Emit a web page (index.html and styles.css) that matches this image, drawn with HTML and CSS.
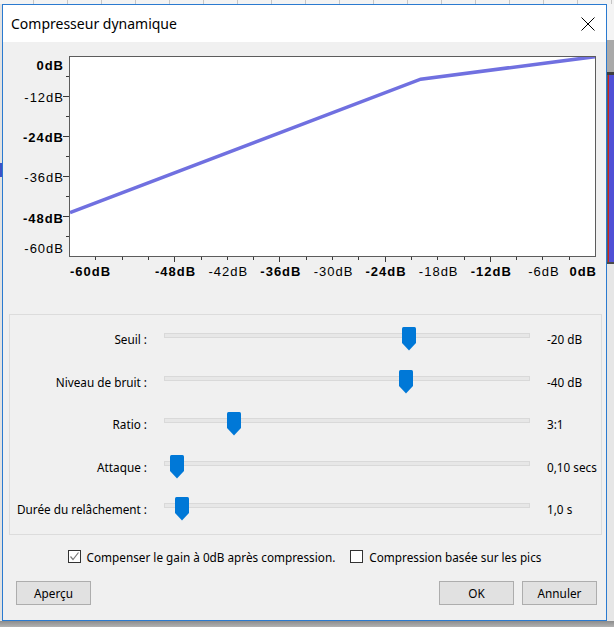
FILE: index.html
```html
<!DOCTYPE html>
<html lang="fr">
<head>
<meta charset="utf-8">
<title>Compresseur dynamique</title>
<link rel="stylesheet" href="styles.css">
</head>
<body>
<div class="screen">
  <div class="bg-top"></div>
  <div class="mid">
    <div class="bg-left"></div>
    <div class="dialog">
      <div class="titlebar">
        <span class="title">Compresseur dynamique</span>
        <svg class="close" width="14" height="14" viewBox="0 0 14 14"><path d="M0.5 0.5 L13.5 13.5 M13.5 0.5 L0.5 13.5"/></svg>
      </div>
      <div class="content">
        <svg class="graph" width="603" height="272" viewBox="0 0 603 272">
          <defs><clipPath id="plotclip"><rect x="67" y="15" width="525" height="199"/></clipPath></defs>
          <rect class="plot-bg" x="67" y="15" width="525" height="199"/>
          <polyline class="curve" clip-path="url(#plotclip)" points="67,170.5 417.7,37.2 593,14.5"/>
          <rect class="plot-frame" x="66.5" y="14.5" width="526" height="200"/>
          <g class="ticks">
            <line x1="63" y1="34.5" x2="66" y2="34.5"/>
            <line x1="60" y1="54.5" x2="66" y2="54.5"/>
            <line x1="63" y1="74.5" x2="66" y2="74.5"/>
            <line x1="60" y1="94.5" x2="66" y2="94.5"/>
            <line x1="63" y1="114.5" x2="66" y2="114.5"/>
            <line x1="60" y1="134.5" x2="66" y2="134.5"/>
            <line x1="63" y1="154.5" x2="66" y2="154.5"/>
            <line x1="60" y1="174.5" x2="66" y2="174.5"/>
            <line x1="63" y1="194.5" x2="66" y2="194.5"/>
            <line x1="92.5" y1="215" x2="92.5" y2="218"/>
            <line x1="119.5" y1="215" x2="119.5" y2="218"/>
            <line x1="145.5" y1="215" x2="145.5" y2="218"/>
            <line x1="171.5" y1="215" x2="171.5" y2="220"/>
            <line x1="198.5" y1="215" x2="198.5" y2="218"/>
            <line x1="224.5" y1="215" x2="224.5" y2="218"/>
            <line x1="250.5" y1="215" x2="250.5" y2="218"/>
            <line x1="276.5" y1="215" x2="276.5" y2="220"/>
            <line x1="303.5" y1="215" x2="303.5" y2="218"/>
            <line x1="329.5" y1="215" x2="329.5" y2="218"/>
            <line x1="355.5" y1="215" x2="355.5" y2="218"/>
            <line x1="382.5" y1="215" x2="382.5" y2="220"/>
            <line x1="408.5" y1="215" x2="408.5" y2="218"/>
            <line x1="434.5" y1="215" x2="434.5" y2="218"/>
            <line x1="461.5" y1="215" x2="461.5" y2="218"/>
            <line x1="487.5" y1="215" x2="487.5" y2="220"/>
            <line x1="513.5" y1="215" x2="513.5" y2="218"/>
            <line x1="539.5" y1="215" x2="539.5" y2="218"/>
            <line x1="566.5" y1="215" x2="566.5" y2="218"/>
          </g>
          <g class="ylabels">
            <text x="61" y="28" class="b">0dB</text>
            <text x="61" y="60">-12dB</text>
            <text x="61" y="100" class="b">-24dB</text>
            <text x="61" y="140">-36dB</text>
            <text x="61" y="181" class="b">-48dB</text>
            <text x="61" y="211">-60dB</text>
          </g>
          <g class="xlabels">
            <text x="67" y="234" class="b start">-60dB</text>
            <text x="172.5" y="234" class="b">-48dB</text>
            <text x="225.3" y="234">-42dB</text>
            <text x="277.9" y="234" class="b">-36dB</text>
            <text x="330.5" y="234">-30dB</text>
            <text x="383.1" y="234" class="b">-24dB</text>
            <text x="435.7" y="234">-18dB</text>
            <text x="488.3" y="234" class="b">-12dB</text>
            <text x="540.9" y="234">-6dB</text>
            <text x="594" y="234" class="b end">0dB</text>
          </g>
        </svg>

        <div class="group">
          <div class="param">
            <span class="plabel">Seuil :</span>
            <div class="slider"><div class="track"></div><svg class="thumb" style="left:238px" viewBox="0 0 14 24"><path d="M1.5 0 H12.5 Q14 0 14 1.5 V16 L7 23.5 L0 16 V1.5 Q0 0 1.5 0 Z"/></svg></div>
            <span class="pvalue">-20 dB</span>
          </div>
          <div class="param">
            <span class="plabel">Niveau de bruit :</span>
            <div class="slider"><div class="track"></div><svg class="thumb" style="left:235px" viewBox="0 0 14 24"><path d="M1.5 0 H12.5 Q14 0 14 1.5 V16 L7 23.5 L0 16 V1.5 Q0 0 1.5 0 Z"/></svg></div>
            <span class="pvalue">-40 dB</span>
          </div>
          <div class="param">
            <span class="plabel">Ratio :</span>
            <div class="slider"><div class="track"></div><svg class="thumb" style="left:63px" viewBox="0 0 14 24"><path d="M1.5 0 H12.5 Q14 0 14 1.5 V16 L7 23.5 L0 16 V1.5 Q0 0 1.5 0 Z"/></svg></div>
            <span class="pvalue">3:1</span>
          </div>
          <div class="param">
            <span class="plabel">Attaque :</span>
            <div class="slider"><div class="track"></div><svg class="thumb" style="left:6px" viewBox="0 0 14 24"><path d="M1.5 0 H12.5 Q14 0 14 1.5 V16 L7 23.5 L0 16 V1.5 Q0 0 1.5 0 Z"/></svg></div>
            <span class="pvalue">0,10 secs</span>
          </div>
          <div class="param">
            <span class="plabel">Durée du relâchement :</span>
            <div class="slider"><div class="track"></div><svg class="thumb" style="left:11px" viewBox="0 0 14 24"><path d="M1.5 0 H12.5 Q14 0 14 1.5 V16 L7 23.5 L0 16 V1.5 Q0 0 1.5 0 Z"/></svg></div>
            <span class="pvalue">1,0 s</span>
          </div>
        </div>

        <div class="checks">
          <label class="check"><span class="box"><svg width="11" height="11" viewBox="0 0 11 11"><path d="M1.5 5.5 L4 8.5 L9.5 1.5"/></svg></span>Compenser le gain à 0dB après compression.</label>
          <label class="check"><span class="box"></span>Compression basée sur les pics</label>
        </div>

        <div class="buttons">
          <button class="btn preview">Aperçu</button>
          <button class="btn">OK</button>
          <button class="btn">Annuler</button>
        </div>
      </div>
    </div>
    <div class="bg-right">
      <div class="r-light"></div>
      <div class="r-gray"></div>
      <div class="r-dark"></div>
      <div class="r-wave"></div>
      <div class="r-dark2"></div>
      <div class="r-rest"></div>
    </div>
  </div>
  <div class="bg-bottom"></div>
</div>
</body>
</html>
```

FILE: styles.css
```css
html, body {
  margin: 0;
  padding: 0;
}
body {
  width: 614px;
  height: 627px;
  overflow: hidden;
  font-family: "Noto Sans", "Open Sans", sans-serif;
  color: #000;
}
.screen {
  width: 614px;
  height: 627px;
  display: flex;
  flex-direction: column;
  background: #e8e8e8;
}
.bg-top {
  height: 4px;
  background: #f3f3f3 repeating-linear-gradient(90deg, transparent 0 33px, #c6c6c6 33px 34px);
}
.mid {
  height: 617px;
  display: flex;
}
.bg-left {
  width: 2px;
  background: linear-gradient(to bottom, #e2e2e2 0 159px, #3c52c8 159px 173px, #e2e2e2 173px);
}
.dialog {
  width: 605px;
  box-sizing: border-box;
  border: 1px solid #2a7ad0;
  display: flex;
  flex-direction: column;
}
.titlebar {
  height: 37px;
  flex: none;
  background: #fff;
  display: flex;
  align-items: center;
  justify-content: space-between;
  padding: 0 11px 0 8px;
}
.title {
  font-size: 14px;
  color: #000;
}
.close path {
  stroke: #000;
  stroke-width: 1;
  fill: none;
}
.content {
  flex: 1;
  background: #f0f0f0;
  display: flex;
  flex-direction: column;
}
.graph {
  display: block;
  flex: none;
}
.plot-bg {
  fill: #fff;
}
.plot-frame {
  fill: none;
  stroke: #5c5c5c;
  stroke-width: 1;
}
.curve {
  fill: none;
  stroke: #7070e0;
  stroke-width: 3.5;
}
.ticks line {
  stroke: #3a3a3a;
  stroke-width: 1;
}
.graph text {
  font-family: "Liberation Sans", Arial, sans-serif;
  font-size: 13px;
  letter-spacing: 1px;
  fill: #000;
}
.graph text.b {
  font-weight: bold;
}
.ylabels text {
  text-anchor: end;
}
.xlabels text {
  text-anchor: middle;
}
.xlabels text.start {
  text-anchor: start;
}
.xlabels text.end {
  text-anchor: end;
}
.group {
  margin: 0 4px 0 6px;
  height: 221px;
  box-sizing: border-box;
  border: 1px solid #dcdcdc;
  padding: 3px 0 3.5px;
  display: grid;
  grid-template-rows: repeat(5, 42.5px);
  flex: none;
}
.param {
  display: grid;
  grid-template-columns: 137px 366px auto;
  column-gap: 17px;
  align-items: center;
  font-size: 11.75px;
}
.plabel {
  text-align: right;
}
.slider {
  position: relative;
  height: 24px;
}
.track {
  margin-top: 6px;
  height: 5px;
  box-sizing: border-box;
  border: 1px solid #d9d9d9;
  background: #e7e7e7;
}
.thumb {
  position: absolute;
  top: 0;
  width: 14px;
  height: 24px;
}
.thumb path {
  fill: #0078d7;
}
.checks {
  display: flex;
  justify-content: center;
  align-items: center;
  gap: 15px;
  margin-top: 10px;
  height: 23px;
  font-size: 11.75px;
  flex: none;
}
.check {
  display: flex;
  align-items: center;
  gap: 6px;
}
.box {
  width: 13px;
  height: 13px;
  box-sizing: border-box;
  border: 1px solid #333;
  background: #fff;
  display: flex;
  align-items: center;
  justify-content: center;
}
.box svg {
  display: block;
}
.box path {
  fill: none;
  stroke: #7a7a7a;
  stroke-width: 1.2;
}
.buttons {
  display: flex;
  gap: 8px;
  margin-top: 13px;
  padding: 0 9px 0 13px;
  flex: none;
}
.btn {
  width: 75px;
  height: 24px;
  box-sizing: border-box;
  border: 1px solid #adadad;
  background: #e1e1e1;
  font-family: "Noto Sans", "Open Sans", sans-serif;
  font-size: 11.75px;
  color: #000;
  padding: 0;
  margin: 0;
}
.btn.preview {
  margin-right: auto;
}
.bg-right {
  width: 7px;
  display: flex;
  flex-direction: column;
}
.r-light {
  height: 36px;
  background: #f4f4f4;
}
.r-gray {
  height: 32px;
  background: #a9a9a9;
}
.r-dark {
  height: 3px;
  background: #3e3e3e;
}
.r-wave {
  height: 187px;
  background: linear-gradient(90deg, #5a5a5a 0 1px, #cc2222 1px 2px, #4f4fd6 2px);
}
.r-dark2 {
  height: 2px;
  background: #4a4a4a;
}
.r-rest {
  flex: 1;
  background: #e6e6e6;
}
.bg-bottom {
  height: 6px;
  background: linear-gradient(#8c8c8c, #b2b2b2);
}
```
